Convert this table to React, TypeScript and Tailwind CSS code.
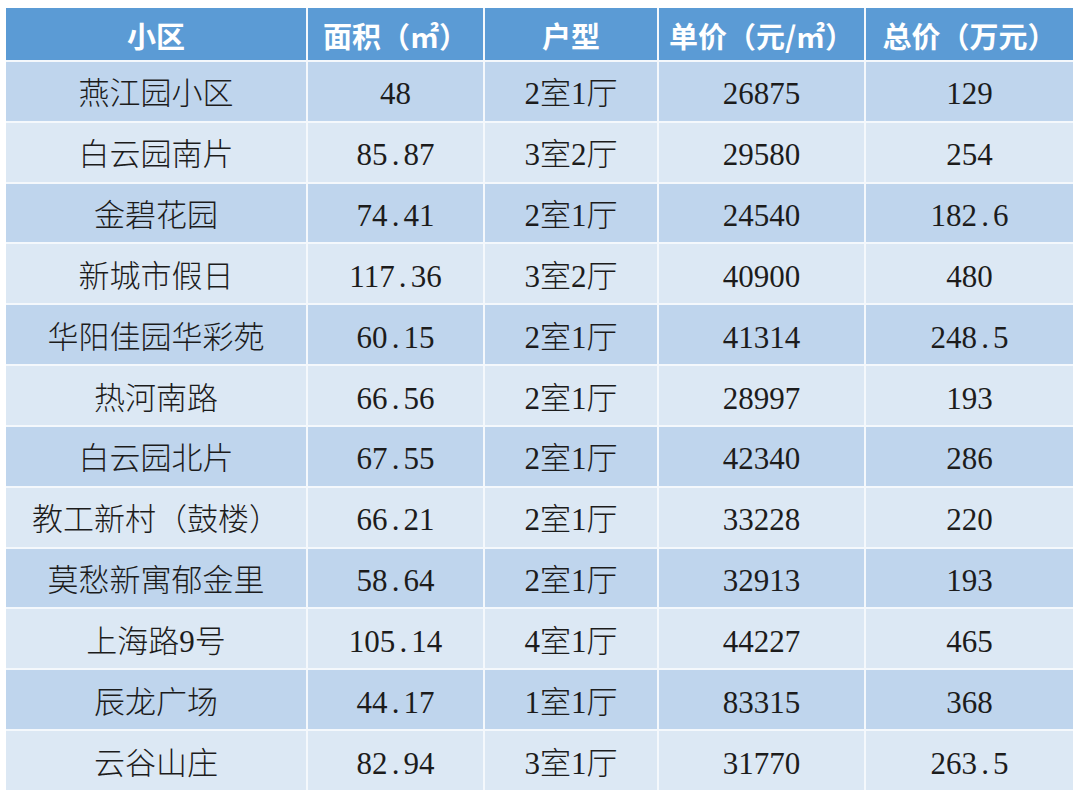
import React from "react";

const headers = ["小区", "面积（㎡）", "户型", "单价（元/㎡）", "总价（万元）"];

const rows: string[][] = [
  ["燕江园小区", "48", "2室1厅", "26875", "129"],
  ["白云园南片", "85.87", "3室2厅", "29580", "254"],
  ["金碧花园", "74.41", "2室1厅", "24540", "182.6"],
  ["新城市假日", "117.36", "3室2厅", "40900", "480"],
  ["华阳佳园华彩苑", "60.15", "2室1厅", "41314", "248.5"],
  ["热河南路", "66.56", "2室1厅", "28997", "193"],
  ["白云园北片", "67.55", "2室1厅", "42340", "286"],
  ["教工新村（鼓楼）", "66.21", "2室1厅", "33228", "220"],
  ["莫愁新寓郁金里", "58.64", "2室1厅", "32913", "193"],
  ["上海路9号", "105.14", "4室1厅", "44227", "465"],
  ["辰龙广场", "44.17", "1室1厅", "83315", "368"],
  ["云谷山庄", "82.94", "3室1厅", "31770", "263.5"],
];

function Cell({ text }: { text: string }) {
  const parts = text.split(".");
  if (parts.length === 2 && /^\d+$/.test(parts[0])) {
    return (
      <span>
        {parts[0]}
        <span className="inline-block w-[16px] text-center">.</span>
        {parts[1]}
      </span>
    );
  }
  return <span>{text}</span>;
}

export default function App() {
  return (
    <div className="w-[1080px] h-[792px] bg-white overflow-hidden pt-[8px] pl-[6px]">
      <div className="grid w-[1067px] grid-cols-[300px_175px_172px_205px_207px] grid-rows-[52px_repeat(12,58.83px)] gap-[2px] bg-[#f4f8fc]">
        {headers.map((h) => (
          <div
            key={h}
            className="flex items-center justify-center bg-[#5b9bd5] text-white font-bold text-[29px] font-['Noto_Sans_CJK_SC',sans-serif] leading-none pt-[2px]"
          >
            {h}
          </div>
        ))}
        {rows.map((r, i) =>
          r.map((c, j) => (
            <div
              key={`${i}-${j}`}
              className={`flex items-center justify-center text-[31px] leading-none text-[#1c1c1c] font-['Liberation_Serif','Noto_Sans_CJK_SC',serif] font-light pt-[5px] ${
                i % 2 === 0 ? "bg-[#bfd5ed]" : "bg-[#dce8f4]"
              }`}
            >
              <Cell text={c} />
            </div>
          ))
        )}
      </div>
    </div>
  );
}
